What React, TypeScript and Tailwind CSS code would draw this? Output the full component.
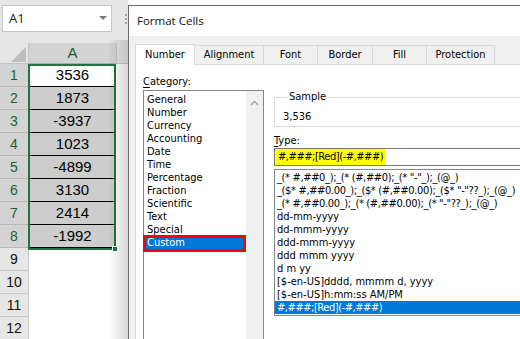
import React from "react";

const cells = ["3536", "1873", "-3937", "1023", "-4899", "3130", "2414", "-1992"];
const cats = ["General", "Number", "Currency", "Accounting", "Date", "Time", "Percentage", "Fraction", "Scientific", "Text", "Special", "Custom"];
const types = [
  '_(* #,##0_);_(* (#,##0);_(* "-"_);_(@_)',
  '_($* #,##0.00_);_($* (#,##0.00);_($* "-"??_);_(@_)',
  '_(* #,##0.00_);_(* (#,##0.00);_(* "-"??_);_(@_)',
  "dd-mm-yyyy",
  "dd-mmm-yyyy",
  "ddd-mmm-yyyy",
  "ddd mmm yyyy",
  "d m yy",
  "[$-en-US]dddd, mmmm d, yyyy",
  "[$-en-US]h:mm:ss AM/PM",
  "#,###;[Red](-#,###)",
];
const tabs = [
  { t: "Alignment", w: "w-[69px]" },
  { t: "Font", w: "w-[54px]" },
  { t: "Border", w: "w-[55px]" },
  { t: "Fill", w: "w-[54px]" },
  { t: "Protection", w: "w-[68px]" },
];

export default function App() {
  return (
    <div className="relative w-[520px] h-[339px] overflow-hidden bg-white font-['Liberation_Sans',sans-serif]">
      {/* Spreadsheet */}
      <div className="flex flex-col w-[128px]">
        <div className="h-[43px] bg-[#e6e6e6] pt-[5px] pl-[2px] flex">
          <div className="w-[110px] h-[27px] bg-white border border-[#c6c6c6] flex items-center justify-between pl-[6px] pr-[4px]">
            <span className="text-[13px] text-[#222] font-['Open_Sans',sans-serif]">A1</span>
            <svg width="8" height="5" viewBox="0 0 8 5">
              <polygon points="0,0 8,0 4,4" fill="#7a7a7a" />
            </svg>
          </div>
          <div className="flex-1 flex justify-end pr-[1px] pt-[9px]">
            <div className="flex flex-col gap-[2px]">
              <div className="w-[2px] h-[2px] bg-[#a0a0a0]" />
              <div className="w-[2px] h-[2px] bg-[#a0a0a0]" />
              <div className="w-[2px] h-[2px] bg-[#a0a0a0]" />
            </div>
          </div>
        </div>
        <div className="flex h-[21px]">
          <div className="w-[29px] bg-[#e6e6e6] border-r border-b border-[#c4c4c4] flex items-end justify-end pr-[2px] pb-[1px]">
            <svg width="15" height="15" viewBox="0 0 15 15">
              <polygon points="15,0 15,15 0,15" fill="#bdbdbd" />
            </svg>
          </div>
          <div className="w-[87px] bg-[#d3d3d3] border-b border-[#ababab] flex items-center justify-center text-[15px] text-[#1d5e37]">A</div>
          <div className="flex-1 bg-[#e6e6e6] border-b border-[#c4c4c4] border-l" />
        </div>
        <div className="relative flex flex-col">
          {Array.from({ length: 12 }).map((_, i) => {
            const sel = i < 8;
            return (
              <div key={i} className="flex h-[23px]">
                <div
                  className={
                    sel
                      ? "w-[29px] bg-[#d3d3d3] border-r border-b border-[#b8b8b8] flex items-center justify-center text-[14px] text-[#1d5e37]"
                      : "w-[29px] bg-[#e6e6e6] border-r border-b border-[#c8c8c8] flex items-center justify-center text-[14px] text-[#111]"
                  }
                >
                  {i + 1}
                </div>
                <div
                  className={
                    sel
                      ? i === 0
                        ? "w-[87px] bg-white border-b border-black flex items-center justify-center text-[15px] text-black"
                        : "w-[87px] bg-[#cdcdcd] border-b border-black flex items-center justify-center text-[15px] text-black"
                      : "w-[87px] bg-white"
                  }
                >
                  {sel ? cells[i] : ""}
                </div>
                <div className="flex-1 bg-white" />
              </div>
            );
          })}
          <div className="absolute left-[28px] top-0 w-[88px] h-[186px] border-2 border-[#217346]" />
          <div className="absolute left-[112px] top-[182px] w-[6px] h-[6px] bg-[#217346] border border-white" />
        </div>
      </div>
      {/* dialog shadow */}
      <div className="absolute left-[108px] top-[40px] w-[20px] h-[300px] bg-gradient-to-r from-transparent to-[#00000026]" />

      {/* Dialog */}
      <div className="absolute left-[128px] top-[5px] w-[410px] h-[350px] bg-[#f0f0f0] border-l border-t border-[#6b6b6b] flex flex-col font-['DejaVu_Sans_Condensed','DejaVu_Sans',sans-serif] text-[11px] text-black">
        <div className="h-[30px] bg-white flex items-center pl-[8px] text-[11.5px] font-['Open_Sans',sans-serif] text-[#111]">
          Format Cells
        </div>
        <div className="h-[28px] flex items-end pl-[6px]">
          <div className="w-[60px] h-[21px] bg-white border border-b-0 border-[#d9d9d9] flex items-center justify-center relative z-10 -mb-px">
            Number
          </div>
          {tabs.map((t) => (
            <div key={t.t} className={`${t.w} h-[19px] border-t border-r border-[#d9d9d9] bg-[#f0f0f0] flex items-center justify-center`}>
              {t.t}
            </div>
          ))}
        </div>
        <div className="flex-1 ml-[6px] bg-white border-l border-t border-[#d9d9d9] flex gap-[10px] pl-[7px] pt-[10px]">
          <div className="w-[121px] flex flex-col">
            <div className="h-[15px] leading-[14px]">
              <span className="underline underline-offset-2">C</span>ategory:
            </div>
            <div className="h-[260px] border border-[#828790] flex">
              <div className="w-[102px] pt-[2px] flex flex-col">
                {cats.map((c) =>
                  c === "Custom" ? (
                    <div key={c} className="relative h-[13px] leading-[13px] pl-[3px] bg-[#0078d7] text-white">
                      {c}
                      <div className="absolute -left-px right-0 -top-px -bottom-[3px] border-[3px] border-[#ff0000]" />
                    </div>
                  ) : (
                    <div key={c} className="h-[13px] leading-[13px] pl-[3px]">
                      {c}
                    </div>
                  )
                )}
              </div>
              <div className="w-[17px] bg-[#f0f0f0] flex justify-center pt-[9px]">
                <svg width="9" height="6" viewBox="0 0 9 6">
                  <polyline points="1,5 4.5,1.5 8,5" fill="none" stroke="#a6a6a6" strokeWidth="1.5" />
                </svg>
              </div>
            </div>
          </div>
          <div className="flex-1 flex flex-col pt-[15px]">
            <fieldset className="h-[37px] border border-[#dcdcdc] pl-[8px] pt-[6px]">
              <legend className="ml-[5px] px-[1px] leading-[14px]">Sample</legend>
              <div className="leading-[14px]">3,536</div>
            </fieldset>
            <div className="mt-[7px] h-[14px] leading-[14px]">
              <span className="underline underline-offset-2">T</span>ype:
            </div>
            <div className="h-[18px] border border-[#7a7a7a] flex">
              <span className="h-full bg-[#ffff00] pl-[3px] pr-[3px] leading-[16px] tracking-[-0.45px]">#,###;[Red](-#,###)</span>
            </div>
            <div className="mt-[3px] h-[147px] border border-[#828790] pt-[1px] flex flex-col">
              {types.map((t, i) =>
                i === types.length - 1 ? (
                  <div key={i} className="h-[13px] leading-[13px] pl-[2px] bg-[#0078d7] text-white whitespace-pre tracking-[-0.45px]">
                    {t}
                  </div>
                ) : i < 3 ? (
                  <div key={i} className="h-[13px] leading-[13px] pl-[2px] whitespace-pre tracking-[-0.35px]">
                    {t}
                  </div>
                ) : (
                  <div key={i} className="h-[13px] leading-[13px] pl-[2px] whitespace-pre">
                    {t}
                  </div>
                )
              )}
            </div>
          </div>
        </div>
      </div>
    </div>
  );
}
